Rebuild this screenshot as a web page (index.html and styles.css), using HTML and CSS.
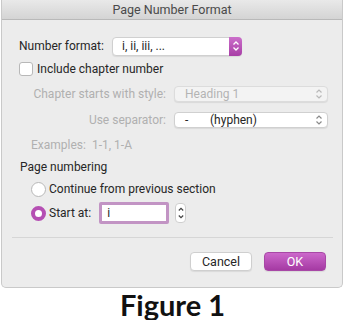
FILE: index.html
```html
<!DOCTYPE html>
<html lang="en">
<head>
  <meta charset="UTF-8" />
  <title>Page Number Format</title>
  <link rel="stylesheet" href="styles.css">
</head>
<body>

<div class="dialog">
  <div class="titlebar">Page Number Format</div>

  <div class="content">
    <div class="row row-format">
      <span class="label">Number format:</span>
      <div class="popup popup-format">
        <span class="popup-text">i, ii, iii, ...</span>
        <span class="stepper-purple">
          <svg width="8" height="12" viewBox="0 0 8 12"><path d="M1.5 4.5 L4 2 L6.5 4.5 M1.5 7.5 L4 10 L6.5 7.5" fill="none" stroke="#fff" stroke-width="1.3"/></svg>
        </span>
      </div>
    </div>

    <div class="row row-check">
      <span class="checkbox"></span>
      <span>Include chapter number</span>
    </div>

    <div class="row row-sub">
      <span class="sub-label disabled">Chapter starts with style:</span>
      <div class="popup popup-wide is-disabled">
        <span class="popup-text">Heading 1</span>
        <svg class="chev" width="8" height="12" viewBox="0 0 8 12"><path d="M1.5 4.5 L4 2 L6.5 4.5 M1.5 7.5 L4 10 L6.5 7.5" fill="none" stroke="#b9b9b9" stroke-width="1.2"/></svg>
      </div>
    </div>

    <div class="row row-sub">
      <span class="sub-label disabled">Use separator:</span>
      <div class="popup popup-wide">
        <span class="popup-text"><span class="dash">-</span>(hyphen)</span>
        <svg class="chev" width="8" height="12" viewBox="0 0 8 12"><path d="M1.5 4.5 L4 2 L6.5 4.5 M1.5 7.5 L4 10 L6.5 7.5" fill="none" stroke="#8a8a8a" stroke-width="1.2"/></svg>
      </div>
    </div>

    <div class="row row-examples disabled">
      <span>Examples:</span><span class="ex-values">1-1, 1-A</span>
    </div>

    <div class="row row-heading">Page numbering</div>

    <div class="row row-radio">
      <span class="radio"></span>
      <span>Continue from previous section</span>
    </div>

    <div class="row row-start">
      <span class="radio radio-on"></span>
      <span>Start at:</span>
      <div class="start-input">i</div>
      <div class="spin">
        <svg width="8" height="16" viewBox="0 0 8 16"><path d="M1.8 5.5 L4 3.3 L6.2 5.5 M1.8 10.5 L4 12.7 L6.2 10.5" fill="none" stroke="#444" stroke-width="1.2"/></svg>
      </div>
    </div>

    <div class="divider"></div>

    <div class="buttons">
      <button class="btn">Cancel</button>
      <button class="btn btn-ok">OK</button>
    </div>
  </div>
</div>

<div class="caption">Figure 1</div>

</body>
</html>
```

FILE: styles.css
```css
body {
  margin: 0;
  background: #fff;
  font-family: Roboto, "Liberation Sans", sans-serif;
  font-size: 12px;
  color: #262626;
}

.dialog {
  width: 340px;
  margin-left: 1px;
  background: #ececec;
  border: 1px solid #c9c9c9;
  border-top: none;
  border-radius: 0 0 5px 5px;
}

.titlebar {
  height: 19px;
  line-height: 19px;
  text-align: center;
  font-size: 12.5px;
  color: #4a4a4a;
  background: linear-gradient(#e9e9e9, #d4d4d4);
  border-bottom: 1px solid #b9b9b9;
}

.content {
  padding: 0 9px 16px 10px;
}

.row {
  display: flex;
  align-items: center;
}

.row-format {
  height: 18px;
  margin-top: 17px;
  padding-left: 7px;
}

.label {
  width: 93px;
}

.popup {
  display: flex;
  align-items: center;
  background: #fff;
  border: 1px solid #d0d0d0;
  border-radius: 4px;
  box-shadow: 0 1px 1px rgba(0,0,0,0.08);
  box-sizing: border-box;
}

.popup-format {
  width: 130px;
  height: 19px;
}

.popup-format .popup-text {
  flex: 1;
  padding-left: 9px;
}

.stepper-purple {
  width: 13px;
  height: 19px;
  margin: -1px -1px -1px 0;
  display: flex;
  align-items: center;
  justify-content: center;
  background: linear-gradient(#cb6fca, #a83ea6);
  border-radius: 0 4px 4px 0;
}

.row-check {
  height: 14px;
  margin-top: 7px;
  padding-left: 7px;
  gap: 4px;
}

.checkbox {
  width: 12px;
  height: 12px;
  background: #fff;
  border: 1px solid #b8b8b8;
  border-radius: 3px;
}

.row-sub {
  height: 16px;
  margin-top: 10px;
}

.sub-label {
  width: 162px;
  text-align: right;
  padding-right: 8px;
  box-sizing: border-box;
}

.popup-wide {
  width: 154px;
  height: 16px;
  padding: 0 4px 0 10px;
}

.popup-wide .popup-text {
  flex: 1;
}

.popup.is-disabled {
  background: #f3f3f3;
  border-color: #dcdcdc;
  color: #b4b4b4;
}

.dash {
  display: inline-block;
  width: 25px;
}

.disabled {
  color: #b0b0b0;
}

.row-examples {
  height: 14px;
  margin-top: 10px;
  padding-left: 19px;
  gap: 6px;
}

.row-heading {
  height: 14px;
  margin-top: 8px;
  padding-left: 8px;
}

.row-radio {
  height: 16px;
  margin-top: 7px;
  padding-left: 19px;
  gap: 3px;
}

.radio {
  width: 13px;
  height: 13px;
  border-radius: 50%;
  background: #fff;
  border: 1px solid #b8b8b8;
}

.row-start {
  height: 22px;
  margin-top: 5px;
  padding-left: 19px;
  gap: 3px;
}

.radio-on {
  width: 7px;
  height: 7px;
  background: #fff;
  border: 4px solid #b54fb3;
}

.start-input {
  width: 59px;
  height: 16px;
  margin-left: 5px;
  padding-left: 5px;
  line-height: 17px;
  background: #fff;
  border: 3px solid #c294c4;
  border-radius: 2px;
}

.spin {
  width: 9px;
  height: 18px;
  margin-left: 3px;
  display: flex;
  align-items: center;
  justify-content: center;
  background: #fff;
  border: 1px solid #cfcfcf;
  border-radius: 4px;
}

.divider {
  height: 1px;
  background: #d6d6d6;
  margin: 13px 0 0 0;
}

.buttons {
  display: flex;
  justify-content: flex-end;
  gap: 12px;
  margin-top: 14px;
  padding-right: 7px;
}

.btn {
  width: 62px;
  height: 19px;
  padding: 0;
  font-family: inherit;
  font-size: 12.5px;
  color: #262626;
  background: #fff;
  border: 1px solid #cfcfcf;
  border-radius: 4px;
  box-shadow: 0 1px 1px rgba(0,0,0,0.08);
}

.btn-ok {
  color: #fff;
  border-color: #a848a6;
  background: linear-gradient(#cc68cb, #a53aa3);
}

.caption {
  text-align: center;
  font-family: Lato, "Open Sans", sans-serif;
  font-weight: bold;
  font-size: 29px;
  line-height: 30px;
  margin-top: 2px;
  color: #111;
}
```
